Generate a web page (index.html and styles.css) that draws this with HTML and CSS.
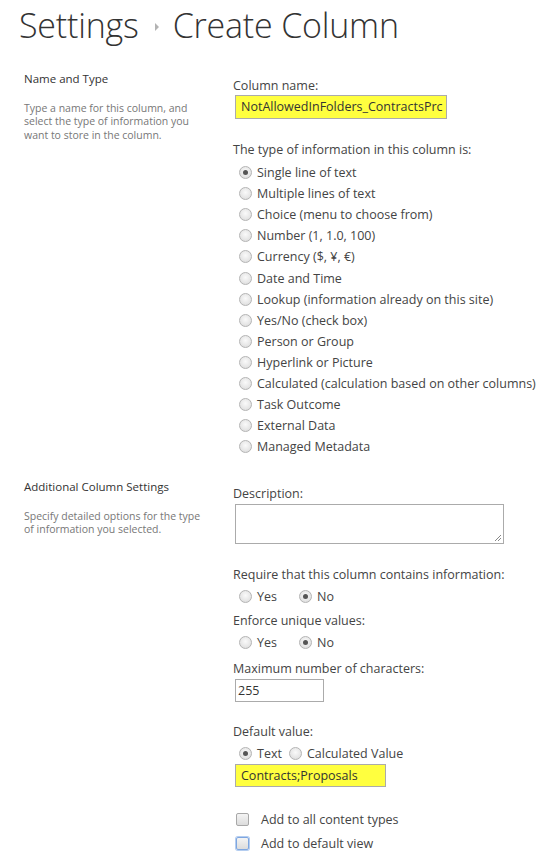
FILE: index.html
```html
<!DOCTYPE html>
<html>
<head>
<meta charset="utf-8">
<link rel="stylesheet" href="styles.css">
</head>
<body>
<h1 class="title"><span>Settings</span><span class="crumb"></span><span>Create Column</span></h1>

<div class="section s1">
  <div class="left">
    <div class="head">Name and Type</div>
    <div class="desc">Type a name for this column, and select the type of information you want to store in the column.</div>
  </div>
  <div class="right">
    <div class="lbl">Column name:</div>
    <div class="input hl name">NotAllowedInFolders_ContractsPrc</div>
    <div class="lbl m-type">The type of information in this column is:</div>
    <div class="radios">
      <div class="row"><span class="radio on"></span>Single line of text</div>
      <div class="row"><span class="radio"></span>Multiple lines of text</div>
      <div class="row"><span class="radio"></span>Choice (menu to choose from)</div>
      <div class="row"><span class="radio"></span>Number (1, 1.0, 100)</div>
      <div class="row"><span class="radio"></span>Currency ($, ¥, €)</div>
      <div class="row"><span class="radio"></span>Date and Time</div>
      <div class="row"><span class="radio"></span>Lookup (information already on this site)</div>
      <div class="row"><span class="radio"></span>Yes/No (check box)</div>
      <div class="row"><span class="radio"></span>Person or Group</div>
      <div class="row"><span class="radio"></span>Hyperlink or Picture</div>
      <div class="row"><span class="radio"></span>Calculated (calculation based on other columns)</div>
      <div class="row"><span class="radio"></span>Task Outcome</div>
      <div class="row"><span class="radio"></span>External Data</div>
      <div class="row"><span class="radio"></span>Managed Metadata</div>
    </div>
  </div>
</div>

<div class="section s2">
  <div class="left">
    <div class="head">Additional Column Settings</div>
    <div class="desc">Specify detailed options for the type of information you selected.</div>
  </div>
  <div class="right">
    <div class="lbl">Description:</div>
    <div class="textarea"><svg class="grip" width="8" height="8" viewBox="0 0 8 8"><path d="M7 1 L1 7 M7 4 L4 7" stroke="#888" stroke-width="1"/></svg></div>
    <div class="lbl m-req">Require that this column contains information:</div>
    <div class="row inline"><span class="radio"></span><span class="yes">Yes</span><span class="radio on"></span>No</div>
    <div class="lbl m-enf">Enforce unique values:</div>
    <div class="row inline"><span class="radio"></span><span class="yes">Yes</span><span class="radio on"></span>No</div>
    <div class="lbl m-max">Maximum number of characters:</div>
    <div class="input small">255</div>
    <div class="lbl m-def">Default value:</div>
    <div class="row inline"><span class="radio on"></span><span class="txt">Text</span><span class="radio"></span>Calculated Value</div>
    <div class="input hl def">Contracts;Proposals</div>
    <div class="checks">
      <div class="crow"><span class="check"></span>Add to all content types</div>
      <div class="crow"><span class="check focus"></span>Add to default view</div>
    </div>
  </div>
</div>
</body>
</html>
```
FILE: styles.css
```css
html, body {
  margin: 0;
  padding: 0;
  background: #fff;
}
body {
  font-family: "Open Sans", "Noto Sans", sans-serif;
  color: #444;
  width: 556px;
  height: 862px;
  overflow: hidden;
}
.title {
  margin: 0;
  padding: 2px 0 0 19px;
  height: 46px;
  font-weight: 300;
  font-size: 34px;
  line-height: 46px;
  color: #333;
  display: flex;
  align-items: center;
  letter-spacing: -0.2px;
}
.crumb {
  width: 0;
  height: 0;
  border-left: 4px solid #b3b3b3;
  border-top: 4px solid transparent;
  border-bottom: 4px solid transparent;
  margin: 4px 14px 0 16px;
}
.section {
  display: flex;
}
.s1 { margin-top: 22px; }
.s2 { margin-top: 21px; }
.left {
  width: 209px;
  padding-left: 24px;
  flex: none;
}
.head {
  font-size: 11.5px;
  line-height: 18px;
  color: #333;
}
.desc {
  margin-top: 13.5px;
  font-size: 10.5px;
  line-height: 13.5px;
  color: #777;
  width: 180px;
}
.right {
  padding-top: 7px;
  font-size: 12.5px;
}
.lbl {
  line-height: 18px;
  color: #444;
}
.input {
  box-sizing: border-box;
  border: 1px solid #ababab;
  height: 24px;
  line-height: 22px;
  padding-left: 5px;
  margin-left: 2px;
  font-size: 12.5px;
  color: #333;
}
.hl {
  background: #ffff3f;
}
.name { width: 212px; }
.m-type { margin-top: 22px; }
.radios { margin-top: 3px; }
.radios .row { height: 21.1px; }
.row {
  height: 21px;
  display: flex;
  align-items: center;
  color: #444;
}
.radio {
  box-sizing: border-box;
  width: 13px;
  height: 13px;
  border-radius: 50%;
  border: 1px solid #b4b4b4;
  background: radial-gradient(circle at 50% 40%, #fafafa 0%, #e6e6e6 60%, #d6d6d6 100%);
  margin: 0 5px 0 6px;
  flex: none;
  position: relative;
}
.radio.on::after {
  content: "";
  position: absolute;
  left: 3px;
  top: 3px;
  width: 5px;
  height: 5px;
  border-radius: 50%;
  background: #555;
}
.textarea {
  box-sizing: border-box;
  width: 269px;
  height: 40px;
  border: 1px solid #ababab;
  margin-left: 2px;
  margin-top: 1px;
  position: relative;
}
.grip {
  position: absolute;
  right: 1px;
  bottom: 1px;
}
.m-req { margin-top: 22px; }
.inline { margin-top: 2px; }
.yes { margin-right: 16px; }
.txt { margin-right: 1px; }
.m-enf { margin-top: 5px; }
.m-max { margin-top: 7px; }
.small {
  width: 89px;
  height: 23px;
  line-height: 21px;
  padding-left: 2px;
  margin-top: 1px;
}
.m-def { margin-top: 21px; }
.def {
  width: 151px;
  height: 23px;
  line-height: 21px;
  margin-top: 0;
}
.checks { margin-top: 20px; }
.crow {
  height: 24px;
  display: flex;
  align-items: center;
}
.check {
  box-sizing: border-box;
  width: 13px;
  height: 13px;
  border: 1px solid #a8a8a8;
  border-radius: 2px;
  background: linear-gradient(#f4f4f4, #dcdcdc);
  margin: 0 12px 0 3px;
  flex: none;
}
.check.focus {
  border-color: #7ea6e0;
  box-shadow: 0 0 0 1px #b4cdf0;
}
```
